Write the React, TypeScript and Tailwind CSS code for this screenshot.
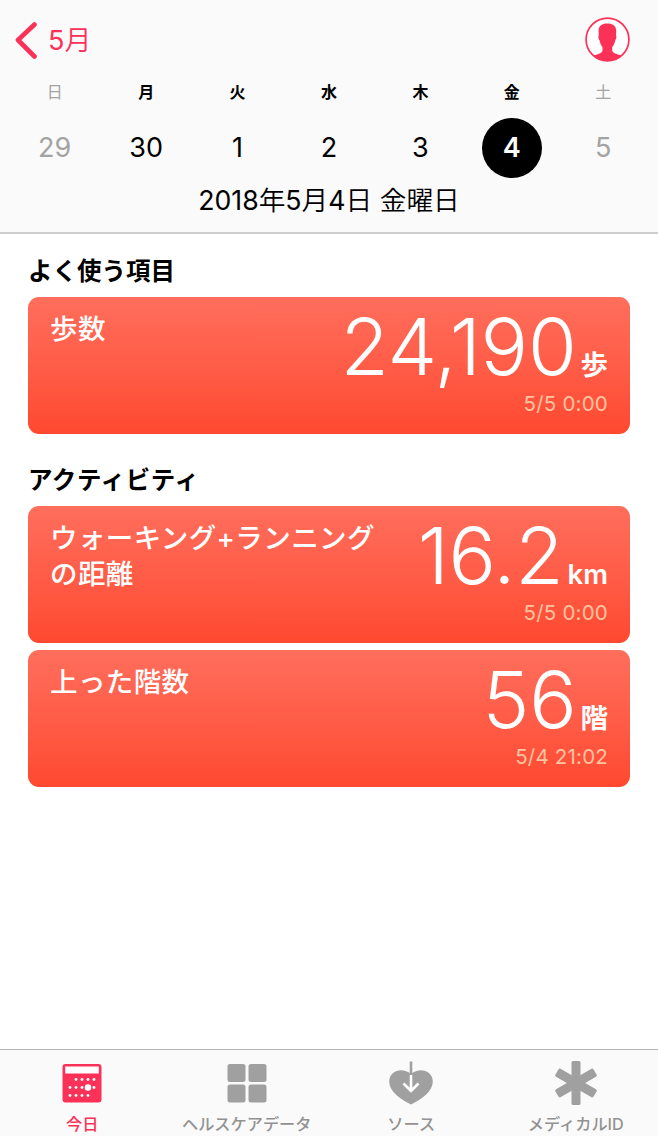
import type { ReactNode } from 'react'

const days = [
    { week: '日', date: 29, off: true },
    { week: '月', date: 30 },
    { week: '火', date: 1 },
    { week: '水', date: 2 },
    { week: '木', date: 3 },
    { week: '金', date: 4, selected: true },
    { week: '土', date: 5, off: true },
]

function dateStyle(day: { off?: boolean, selected?: boolean }) {
    if (day.selected) return 'bg-black text-white font-semibold'
    return day.off ? 'text-[#a3a3a3]' : 'text-black'
}

function Header() {
    return (
        <header className="h-[234px] shrink-0 border-b-2 border-[#cfcfcf] bg-[#fafafa]">
            <div className="flex h-[79px] items-center justify-between pl-[15px] pr-7">
                <button className="flex items-center text-[#fc3158]">
                    <svg width="23" height="38" viewBox="0 0 23 38" fill="none" stroke="currentColor" strokeWidth="4.6" strokeLinecap="round" strokeLinejoin="round">
                        <path d="M19.5 3.5L3 19l16.500 16.500" />
                    </svg>
                    <span className="ml-[10px] pt-[2px] text-[27px] leading-10 font-[350]"><span className="font-normal">5</span>月</span>
                </button>
                <svg width="45" height="45" viewBox="0 0 45 45">
                    <circle cx="22.500" cy="22.500" r="21.400" fill="#fff" stroke="#fc3158" strokeWidth="1.700" />
                    <path fill="#fc3158" d="M22.300 6.500c-5.300 0-8.700 2.300-8.700 7 0 2 .2 3.500.2 5-.7.300-.4 3.600.7 4.800.6 3 1.500 5.200 3 6.800v3.700c-.6 2.400-3.400 3-9.200 4.800A21.400 21.400 0 0 0 22.500 44a21.400 21.400 0 0 0 14.200-5.400c-5.900-1.800-8.700-2.400-9.500-4.800v-3.700c1.600-1.600 2.500-3.800 3-6.800 1.300-1.200 1.600-4.500.8-4.800.1-1.500.3-3 .2-5-.1-4.700-3.600-7-8.900-7z" />
                </svg>
            </div>
            <div className="grid grid-cols-7 px-[9px]">
                {days.map((day) => (
                    <div key={day.week} className="flex flex-col items-center">
                        <span className={day.off ? 'text-[16px] leading-[26px] text-[#a3a3a3]' : 'text-[16px] leading-[26px] font-bold text-black'}>
                            {day.week}
                        </span>
                        <span className={`mt-[13px] flex size-[60px] items-center justify-center rounded-full text-[27px] ${dateStyle(day)}`}>
                            {day.date}
                        </span>
                    </div>
                ))}
            </div>
            <p className="mt-[2px] text-center text-[26.700px] leading-10 font-[350]">
                <span className="font-normal">2018</span>年<span className="font-normal">5</span>月<span className="font-normal">4</span>日 金曜日
            </p>
        </header>
    )
}

type CardProps = { title: ReactNode, value: string, unit: string, time: string }

function Card({ title, value, unit, time }: CardProps) {
    return (
        <div className="flex h-[137px] justify-between rounded-[11px] bg-linear-to-b from-[#ff6e5c] to-[#ff482f] px-[22px] text-white">
            <h3 className="mt-[14px] text-[27.500px] leading-[36px] font-medium tracking-[0.4px] whitespace-nowrap">{title}</h3>
            <div className="flex flex-col items-end">
                <div className="mt-[9px] flex h-20 items-baseline gap-[4px] leading-20">
                    <span className="text-[79px] font-light tracking-[-0.2px]">{value}</span>
                    <span className="text-[27.500px] font-semibold">{unit}</span>
                </div>
                <span className="mt-[3px] text-[20.500px] leading-[30px] tracking-[0.2px] text-[#ffc4a0]">{time}</span>
            </div>
        </div>
    )
}

function CalendarIcon() {
    const dots = [
        [14, 16.5], [20, 16.5], [26, 16.5], [32, 16.5],
        [8, 24.5], [14, 24.5], [20, 24.5], [32, 24.5],
        [8, 32.5], [14, 32.5], [20, 32.5], [26, 32.5],
    ]
    return (
        <svg width="40" height="40" viewBox="0 0 40 40">
            <rect x=".5" y="1" width="39" height="38.500" rx="3" fill="#fc3158" />
            <rect x="3.200" y="3.500" width="33.600" height="7" fill="#fff" />
            {dots.map(([x, y]) => <circle key={`${x}-${y}`} cx={x} cy={y} r="1.400" fill="#fff" />)}
            <circle cx="26" cy="24.500" r="3.300" fill="#fff" />
        </svg>
    )
}

function GridIcon() {
    return (
        <svg width="40" height="40" viewBox="0 0 40 40" fill="#a0a0a0">
            <rect x=".5" y="1" width="18" height="18" rx="2.500" />
            <rect x="21.500" y="1" width="18" height="18" rx="2.500" />
            <rect x=".5" y="21.500" width="18" height="18" rx="2.500" />
            <rect x="21.500" y="21.500" width="18" height="18" rx="2.500" />
        </svg>
    )
}

function HeartIcon() {
    return (
        <svg width="44" height="44" viewBox="0 0 44 44" fill="none">
            <path d="M22 43.500C12 38.500.2 31 .2 20.500.2 10 13 5.500 22 13 31 5.500 43.800 10 43.800 20.500 43.800 31 32 38.500 22 43.500z" fill="#a0a0a0" />
            <path d="M22 13.500V30M14.500 22.500L22 30l7.500-7.500" stroke="#fff" strokeWidth="2.600" />
            <path d="M22 .5v13.500" stroke="#a0a0a0" strokeWidth="2.600" />
        </svg>
    )
}

function MedicalIcon() {
    return (
        <svg width="44" height="44" viewBox="0 0 44 44" fill="#a0a0a0">
            <rect x="17.500" y="0" width="9" height="44" rx="1.500" />
            <rect x="17.500" y="0" width="9" height="44" rx="1.500" transform="rotate(60 22 22)" />
            <rect x="17.500" y="0" width="9" height="44" rx="1.500" transform="rotate(-60 22 22)" />
        </svg>
    )
}

const tabs = [
    { label: '今日', icon: <CalendarIcon />, active: true },
    { label: 'ヘルスケアデータ', icon: <GridIcon /> },
    { label: 'ソース', icon: <HeartIcon /> },
    { label: 'メディカルID', icon: <MedicalIcon /> },
]

export default function App() {
    return (
        <div className="flex h-screen flex-col overflow-hidden bg-white font-[Inter,'Noto_Sans_CJK_JP',sans-serif] text-black">
            <Header />
            <main className="flex-1 px-7">
                <h2 className="pt-[19px] text-[24.500px] leading-9 font-semibold">よく使う項目</h2>
                <div className="mt-2">
                    <Card title="歩数" value="24,190" unit="歩" time="5/5 0:00" />
                </div>
                <h2 className="mt-[28px] text-[24.500px] leading-9 font-semibold tracking-[0.6px]">アクティビティ</h2>
                <div className="mt-2 flex flex-col gap-[7px]">
                    <Card title={<>ウォーキング+ランニング<br />の距離</>} value="16.2" unit="km" time="5/5 0:00" />
                    <Card title="上った階数" value="56" unit="階" time="5/4 21:02" />
                </div>
            </main>
            <nav className="grid h-[87px] shrink-0 grid-cols-4 border-t border-[#b4b4b4] bg-[#fafafa]">
                {tabs.map((tab) => (
                    <button key={tab.label} className={tab.active ? 'flex flex-col items-center text-[#fc3158]' : 'flex flex-col items-center text-[#929292]'}>
                        <span className="mt-[10px] flex h-[46px] items-center justify-center">{tab.icon}</span>
                        <span className="mt-[6px] text-[16.200px] leading-6 font-medium whitespace-nowrap">{tab.label}</span>
                    </button>
                ))}
            </nav>
        </div>
    )
}
